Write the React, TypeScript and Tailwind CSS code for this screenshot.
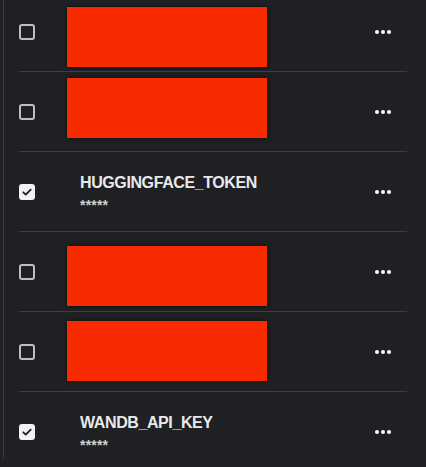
import React from 'react';

type Row = {
  checked: boolean;
  name?: string;
  redact?: string;
};

const rows: Row[] = [
  { checked: false, redact: 'mt-[15px]' },
  { checked: false, redact: 'mt-[6px]' },
  { checked: true, name: 'HUGGINGFACE_TOKEN' },
  { checked: false, redact: 'mt-[14px]' },
  { checked: false, redact: 'mt-[9px]' },
  { checked: true, name: 'WANDB_API_KEY' },
];

const Checkbox = ({ checked }: { checked: boolean }) =>
  checked ? (
    <div className="w-4 h-4 rounded-[3px] bg-[#f2f2f2] flex items-center justify-center shrink-0">
      <svg width="12" height="12" viewBox="0 0 12 12" fill="none">
        <path d="M2.3 6.3 L4.8 8.6 L9.7 3.6" stroke="#1f2023" strokeWidth="1.8" strokeLinecap="round" strokeLinejoin="round" />
      </svg>
    </div>
  ) : (
    <div className="w-4 h-4 rounded-[3px] border-2 border-[#bdbdbd] shrink-0" />
  );

const Dots = () => (
  <svg width="18" height="6" viewBox="0 0 18 6" fill="#ffffff">
    <circle cx="3" cy="3" r="2" />
    <circle cx="9" cy="3" r="2" />
    <circle cx="15" cy="3" r="2" />
  </svg>
);

export default function App() {
  return (
    <div className="w-full h-[467px] overflow-hidden bg-[#1f2023] pl-[3px]" style={{ fontFamily: '"Liberation Sans", Arial, sans-serif' }}>
      <div className="h-full border-l border-[#3a3b3e]">
        <div className="-mt-[8px] ml-[15px] w-[388px]">
          {rows.map((row, i) => (
            <div
              key={i}
              className={`h-[80px] flex ${row.redact ? 'items-start' : 'items-center'} border-b border-[#3d3e41]`}
            >
              <div className="h-full flex items-center">
                <Checkbox checked={row.checked} />
              </div>
              {row.redact ? (
                <div className={`${row.redact} ml-[32px] w-[200px] h-[60px] bg-[#f72a00] shadow-[0_0_3px_rgba(0,0,0,0.8)]`} />
              ) : (
                <div className="ml-[45px] mt-[2px] flex flex-col">
                  <span className="text-[16px] leading-[24px] font-bold tracking-[-0.4px] text-[#e9e9ea]">{row.name}</span>
                  <span className="text-[14px] leading-[20px] font-bold tracking-[0.2px] text-[#d0d0d0]">*****</span>
                </div>
              )}
              <div className="ml-auto h-full flex items-center pr-[15px]">
                <Dots />
              </div>
            </div>
          ))}
        </div>
      </div>
    </div>
  );
}
